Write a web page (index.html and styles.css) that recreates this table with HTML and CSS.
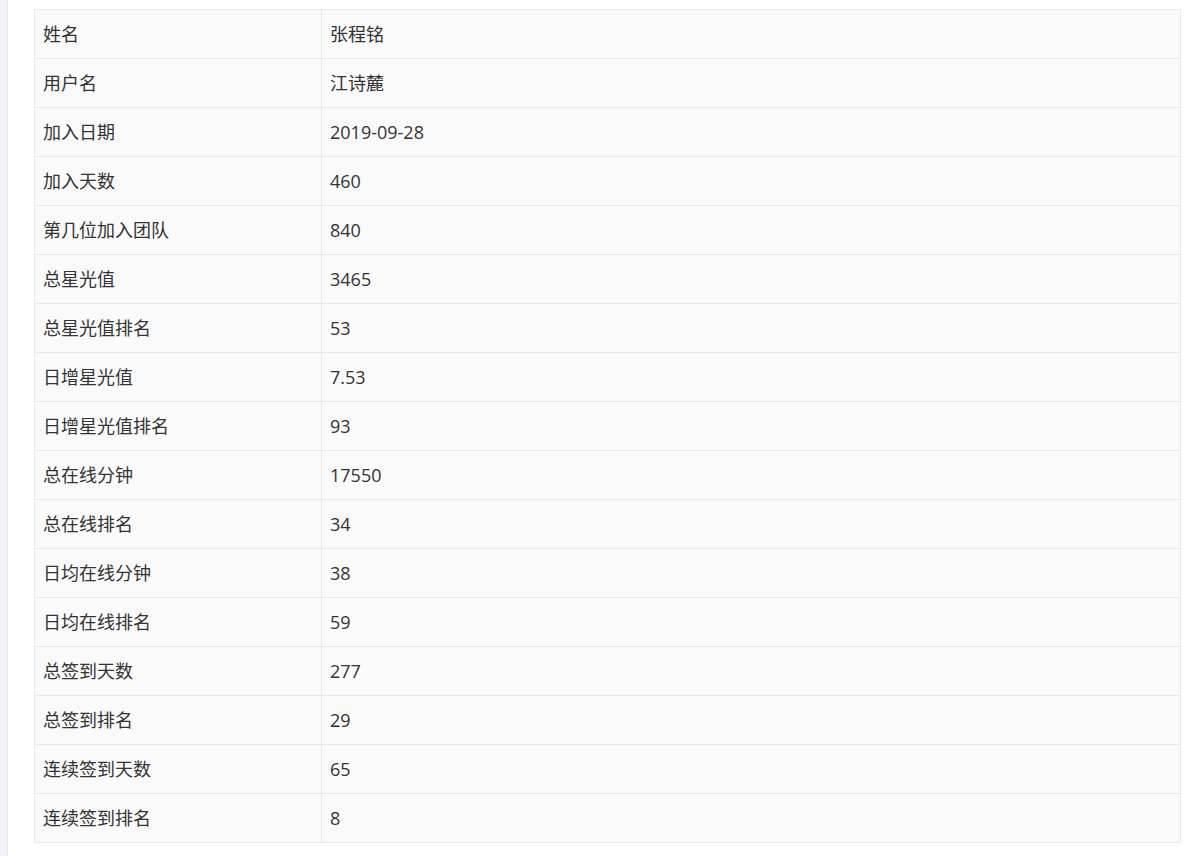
FILE: index.html
```html
<!DOCTYPE html>
<html lang="zh-CN">
<head>
<meta charset="utf-8">
<title>成员信息</title>
<link rel="stylesheet" href="styles.css">
</head>
<body>
<div class="layout">
  <aside class="sidebar"></aside>
  <main class="main">
    <table class="info-table">
      <tbody>
        <tr><td class="label">姓名</td><td class="value">张程铭</td></tr>
        <tr><td class="label">用户名</td><td class="value">江诗麓</td></tr>
        <tr><td class="label">加入日期</td><td class="value">2019-09-28</td></tr>
        <tr><td class="label">加入天数</td><td class="value">460</td></tr>
        <tr><td class="label">第几位加入团队</td><td class="value">840</td></tr>
        <tr><td class="label">总星光值</td><td class="value">3465</td></tr>
        <tr><td class="label">总星光值排名</td><td class="value">53</td></tr>
        <tr><td class="label">日增星光值</td><td class="value">7.53</td></tr>
        <tr><td class="label">日增星光值排名</td><td class="value">93</td></tr>
        <tr><td class="label">总在线分钟</td><td class="value">17550</td></tr>
        <tr><td class="label">总在线排名</td><td class="value">34</td></tr>
        <tr><td class="label">日均在线分钟</td><td class="value">38</td></tr>
        <tr><td class="label">日均在线排名</td><td class="value">59</td></tr>
        <tr><td class="label">总签到天数</td><td class="value">277</td></tr>
        <tr><td class="label">总签到排名</td><td class="value">29</td></tr>
        <tr><td class="label">连续签到天数</td><td class="value">65</td></tr>
        <tr><td class="label">连续签到排名</td><td class="value">8</td></tr>
      </tbody>
    </table>
  </main>
</div>
</body>
</html>
```
FILE: styles.css
```css
html, body {
  margin: 0;
  padding: 0;
  background: #ffffff;
  font-family: "Open Sans", "Noto Sans CJK SC", sans-serif;
  color: #333333;
}

.layout {
  display: flex;
  min-height: 856px;
}

.sidebar {
  width: 7px;
  flex: 0 0 7px;
  background: #f2f3f7;
  border-right: 1px solid #e4e6ec;
}

.main {
  flex: 1;
  padding: 9px 9px 0 26px;
}

.info-table {
  width: 100%;
  border-collapse: collapse;
  background: #fafafa;
  font-size: 18px;
}

.info-table td {
  border: 1px solid #e8e8e8;
  height: 49px;
  padding: 0 0 0 8px;
  box-sizing: border-box;
  vertical-align: middle;
  line-height: 24px;
}

.info-table .label {
  width: 287px;
}
```
